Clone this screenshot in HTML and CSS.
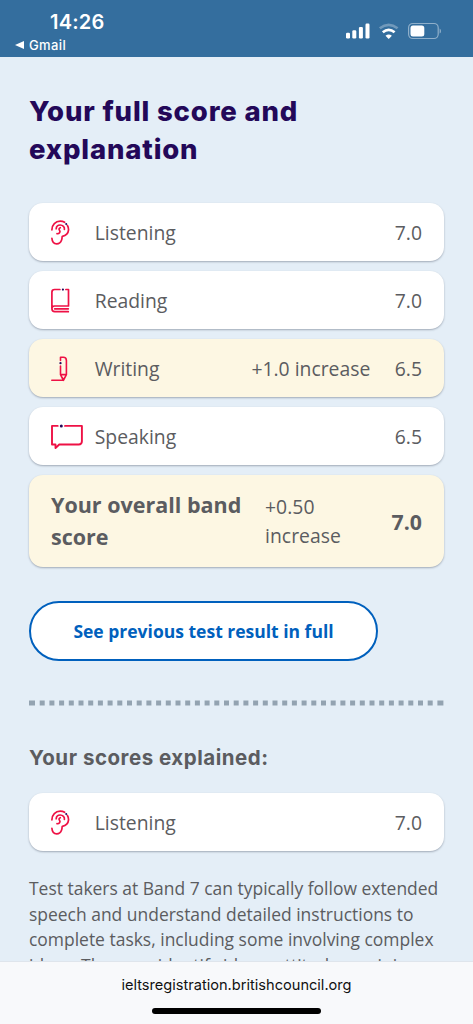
FILE: index.html
```html
<!DOCTYPE html>
<html lang="en">
<head>
<meta charset="utf-8">
<title>IELTS results</title>
<link rel="stylesheet" href="styles.css">
</head>
<body>
<svg class="defs" aria-hidden="true">
  <symbol id="ear" viewBox="0 0 32 26">
    <g fill="none" stroke="#ee1145" stroke-width="1.7" stroke-linecap="round" stroke-linejoin="round">
      <path d="M.9 9.8C.9 4.700 4.600 1.200 9.200 1.200c1.800 0 3.300.4 4.400 1.100"/>
      <path d="M16.400 5.500c.9 1.500 1.300 3 1.100 4.700-.3 3.300-3 5.500-6.200 6.100-.4 1.300-.1 2.300-.7 3.700-.9 2.600-2.700 3.900-4.900 3.900-2.900 0-4.600-2.400-4.800-5.600"/>
      <path d="M5.200 8.800c.1-2.300 1.800-3.800 4-3.800 2.700 0 4.600 2 4.200 4.300"/>
      <path d="M9.300 7.700c-1.500.5-1.600 2-.7 2.700 1.100 1.500-.4 3.700-2.600 3.300"/>
    </g>
    <circle cx="15.200" cy="3.900" r="1" fill="#230859"/>
  </symbol>
  <symbol id="book" viewBox="0 0 32 26">
    <g fill="none" stroke="#ee1145" stroke-width="1.7" stroke-linecap="round" stroke-linejoin="round">
      <path d="M8.900 1.500H3.600Q.9 1.500.9 4.200V20.600Q.9 23.700 3.800 23.700H17.300M14.900 1.500H17.500V18H3.500Q.9 18 .9 20.700M3.700 20.800H17.300"/>
    </g>
    <circle cx="11.900" cy="1.600" r="1.100" fill="#230859"/>
  </symbol>
  <symbol id="pencil" viewBox="0 0 32 26">
    <g fill="none" stroke="#ee1145" stroke-width="1.6" stroke-linecap="round" stroke-linejoin="round">
      <path d="M9.500 4.500V1.300H12.300Q15.400 1.300 15.400 4.500V18.600L12.400 24.300H.8M9.500 10V18.600L12.400 24.300M9.500 18.600H15.400M11.100 21.300 12.400 24.300 13.800 21.300"/>
    </g>
    <circle cx="9.500" cy="7.200" r="1.150" fill="#230859"/>
  </symbol>
  <symbol id="bubble" viewBox="0 0 32 26">
    <path d="M6.700 1.900H1V20.500H4.500V24.100L8.200 20.500H27.700Q30.900 20.500 30.900 17.300V1.900H14" fill="none" stroke="#ee1145" stroke-width="1.900" stroke-linecap="round" stroke-linejoin="round"/>
    <circle cx="10.300" cy="1.900" r="1.500" fill="#230859"/>
  </symbol>
</svg>
<div class="phone">
  <header class="status">
    <div class="clock-block">
      <div class="clock">14:26</div>
      <div class="back"><svg width="9" height="8" viewBox="0 0 9 8"><path d="M0 4 9 0V8Z" fill="#fff"/></svg><span>Gmail</span></div>
    </div>
    <svg class="indicators" width="96" height="20" viewBox="0 0 96 20">
      <g fill="#fff">
        <rect x="1" y="12.800" width="4" height="5.600" rx="1.200"/><rect x="7.300" y="10.300" width="4" height="8.100" rx="1.200"/><rect x="13.900" y="6.900" width="4" height="11.500" rx="1.200"/><rect x="20.500" y="3.500" width="4" height="14.900" rx="1.200"/>
        <path d="M43.700 18.900 40.500 15.800Q43.700 13.300 46.900 15.800Z"/>
      </g>
      <g fill="none" stroke="#fff" stroke-width="2.700">
        <path d="M34.800 8.300Q43.700 1.500 52.600 8.300" opacity=".3"/>
        <path d="M37.800 12.300Q43.700 7.500 49.600 12.300"/>
      </g>
      <rect x="63.600" y="3.500" width="29.600" height="15" rx="4.200" fill="none" stroke="#fff" stroke-width="1.200" opacity=".45"/>
      <rect x="65.500" y="5.400" width="13.800" height="11.200" rx="2.500" fill="#fff"/>
      <path d="M94.600 8.500Q96 9 96 11T94.600 13.500Z" fill="#fff" opacity=".45"/>
    </svg>
  </header>
  <main class="page">
    <h1 class="title">Your full score and<br>explanation</h1>
    <section class="scores">
      <div class="card"><svg class="icon"><use href="#ear"/></svg><span class="skill">Listening</span><span class="value">7.0</span></div>
      <div class="card"><svg class="icon"><use href="#book"/></svg><span class="skill">Reading</span><span class="value">7.0</span></div>
      <div class="card raised"><svg class="icon"><use href="#pencil"/></svg><span class="skill">Writing</span><span class="change">+1.0 increase</span><span class="value">6.5</span></div>
      <div class="card"><svg class="icon"><use href="#bubble"/></svg><span class="skill">Speaking</span><span class="value">6.5</span></div>
      <div class="card raised overall"><strong class="overall-name">Your overall band<br>score</strong><span class="overall-change">+0.50<br>increase</span><strong class="value">7.0</strong></div>
    </section>
    <button class="previous">See previous test result in full</button>
    <svg class="divider" width="415" height="6"><path d="M0 3H415" stroke="#93a3b1" stroke-width="4.800" stroke-dasharray="6 4.700 5 4.700 5 4.700 5 4.700 5 4.700 5 4.700 5 4.700 5 4.700 5 4.700 5 4.700 5 4.700 5 4.700 5 4.700 5 4.700 5 4.700 5 4.700 5 4.700 5 4.700 5 4.700 5 4.700 5 4.700 5 4.700 5 4.700 5 4.700 5 4.700 5 4.700 5 4.700 5 4.700 5 4.700 5 4.700 5 4.700 5 4.700 5 4.700 5 4.700 5 4.700 5 4.700 5 4.700 5 4.700 5 4.700 5 4.700 5 4.700 5 4.700 6 4.700"/></svg>
    <h2 class="subtitle">Your scores explained:</h2>
    <div class="card"><svg class="icon"><use href="#ear"/></svg><span class="skill">Listening</span><span class="value">7.0</span></div>
    <p class="explanation">Test takers at Band 7 can typically follow extended<br>speech and understand detailed instructions to<br>complete tasks, including some involving complex<br>ideas. They can identify ideas, attitudes, opinions</p>
  </main>
  <footer class="address"><span>ieltsregistration.britishcouncil.org</span><div class="home"></div></footer>
</div>
</body>
</html>
```

FILE: styles.css
```css
* { box-sizing: border-box; }
body { margin: 0; font-family: "Open Sans", "Noto Sans", sans-serif; color: #5b5c60; }
.defs { display: none; }
.phone { width: 473px; height: 1024px; display: flex; flex-direction: column; overflow: hidden; background: #e4eef7; }
.status { height: 57px; flex: none; background: #346e9e; color: #fff; display: flex; justify-content: space-between; padding: 0 32px 0 15px; font-family: Inter, sans-serif; }
.clock { font-size: 20px; font-weight: 600; line-height: 24px; margin: 10px 0 0 35px; letter-spacing: .2px; }
.back { display: flex; align-items: center; gap: 5px; font-size: 13px; font-weight: 500; line-height: 16px; margin-top: 3px; letter-spacing: .4px; }
.indicators { margin-top: 20px; }
.page { flex: 1; min-height: 0; overflow: hidden; padding: 36px 29px 0; }
.title { margin: 0; font: 800 27.500px/37.500px Inter, sans-serif; color: #230859; letter-spacing: .83px; }
.scores { display: flex; flex-direction: column; gap: 10px; margin-top: 35px; }
.card { height: 58px; border-radius: 14px; background: #fff; box-shadow: 0 1px 2px rgba(60,70,90,.4); display: flex; align-items: center; padding: 0 22px; font-size: 19.350px; line-height: 29px; }
.raised { background: #fdf7e3; }
.icon { width: 32px; height: 26px; flex: none; margin: 1px 11.700px 0 0; }
.value { margin-left: auto; }
.change { margin-left: auto; }
.change + .value { margin-left: 24.500px; }
.overall { height: 92px; }
.overall-name { width: 214px; font-size: 21.500px; line-height: 31.500px; padding-bottom: 1px; }
.overall-change { letter-spacing: .05px; }
.overall strong.value { font-size: 21.300px; }
.previous { display: block; width: 349px; height: 60px; margin: 34px 0 0; padding: 0; border: 2px solid #0060bd; border-radius: 30px; background: #fff; color: #0060bd; font: 700 17.500px/26px "Open Sans", sans-serif; }
.divider { display: block; margin: 39px 0 0; }
.subtitle { margin: 36px 0 21px; padding-top: 1px; font: 700 20.500px/29px Inter, sans-serif; letter-spacing: .52px; }
.explanation { margin: 25px 0 0; font-size: 17.470px; line-height: 25.700px; white-space: nowrap; }
.address { height: 63px; flex: none; background: #f8f9fb; border-top: 1px solid #dfe5ec; display: flex; flex-direction: column; align-items: center; color: #111; font: 400 14.600px/20px Inter, sans-serif; padding-top: 13px; }
.home { width: 169px; height: 6px; border-radius: 3px; background: #000; margin-top: 13px; }
```
